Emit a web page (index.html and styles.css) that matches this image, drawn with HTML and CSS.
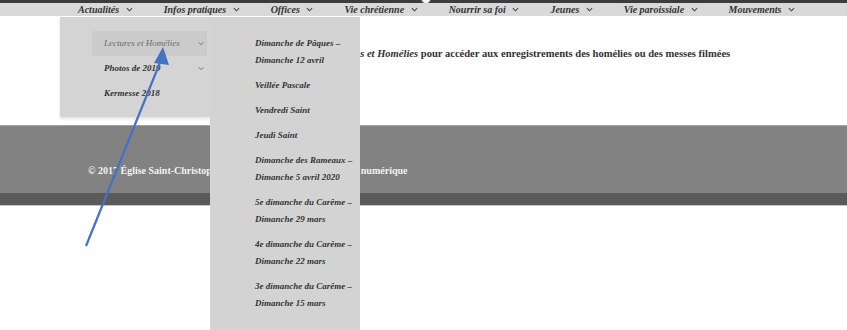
FILE: index.html
```html
<!DOCTYPE html>
<html lang="fr">
<head>
    <meta charset="UTF-8">
    <title>Lectures et Homélies</title>
    <link rel="stylesheet" href="styles.css">
</head>
<body>
<div class="page">
    <div class="topline"><span class="knob"></span></div>
    <nav class="menu">
        <ul class="menu-list">
            <li class="menu-item active">Actualités <svg class="chev" viewBox="0 0 8 5"><polyline points="1,1 4,4 7,1"/></svg>
                <ul class="sub">
                    <li class="sub-item hover">Lectures et Homélies <svg class="chev" viewBox="0 0 8 5"><polyline points="1,1 4,4 7,1"/></svg></li>
                    <li class="sub-item">Photos de 2019 <svg class="chev" viewBox="0 0 8 5"><polyline points="1,1 4,4 7,1"/></svg></li>
                    <li class="sub-item">Kermesse 2018</li>
                    <ul class="sub sub-2">
                        <li class="sub-item">Dimanche de Pâques – Dimanche 12 avril</li>
                        <li class="sub-item">Veillée Pascale</li>
                        <li class="sub-item">Vendredi Saint</li>
                        <li class="sub-item">Jeudi Saint</li>
                        <li class="sub-item">Dimanche des Rameaux – Dimanche 5 avril 2020</li>
                        <li class="sub-item">5e dimanche du Carême – Dimanche 29 mars</li>
                        <li class="sub-item">4e dimanche du Carême – Dimanche 22 mars</li>
                        <li class="sub-item">3e dimanche du Carême – Dimanche 15 mars</li>
                    </ul>
                </ul>
            </li>
            <li class="menu-item">Infos pratiques <svg class="chev" viewBox="0 0 8 5"><polyline points="1,1 4,4 7,1"/></svg></li>
            <li class="menu-item">Offices <svg class="chev" viewBox="0 0 8 5"><polyline points="1,1 4,4 7,1"/></svg></li>
            <li class="menu-item">Vie chrétienne <svg class="chev" viewBox="0 0 8 5"><polyline points="1,1 4,4 7,1"/></svg></li>
            <li class="menu-item">Nourrir sa foi <svg class="chev" viewBox="0 0 8 5"><polyline points="1,1 4,4 7,1"/></svg></li>
            <li class="menu-item">Jeunes <svg class="chev" viewBox="0 0 8 5"><polyline points="1,1 4,4 7,1"/></svg></li>
            <li class="menu-item">Vie paroissiale <svg class="chev" viewBox="0 0 8 5"><polyline points="1,1 4,4 7,1"/></svg></li>
            <li class="menu-item">Mouvements <svg class="chev" viewBox="0 0 8 5"><polyline points="1,1 4,4 7,1"/></svg></li>
        </ul>
    </nav>

    <main class="content">
        <p>Pour revoir les messes, cliquez sur Actualités &gt; <em>Lectures et Homélies</em> pour accéder aux enregistrements des homélies ou des messes filmées</p>
    </main>

    <footer class="footer">
        <div class="footer-main">
            <p>© 2017 Église Saint-Christophe de Javel – Réalisé avec l'Atelier numérique</p>
        </div>
        <div class="footer-bottom"></div>
    </footer>

    <svg class="arrow" width="847" height="330" viewBox="0 0 847 330">
        <line x1="86" y1="246" x2="161" y2="60" />
        <polygon points="163,47 154,63 169,65" />
    </svg>
</div>
</body>
</html>
```

FILE: styles.css
```css
body {
    margin: 0;
    background: #fff;
    font-family: "Liberation Serif", serif;
    color: #333;
}

.page {
    position: relative;
    height: 330px;
    overflow: hidden;
}

.topline {
    height: 3px;
    background: #3c3c3c;
    position: relative;
}

.knob {
    position: absolute;
    left: 421px;
    top: -6px;
    width: 8px;
    height: 8px;
    border-radius: 50%;
    background: #fff;
    border: 1px solid #777;
}

.menu {
    background: #d9d9d9;
    height: 13px;
    position: relative;
    z-index: 5;
}

.menu-list {
    list-style: none;
    margin: 0;
    padding: 0 0 0 60px;
    display: flex;
}

.menu-item {
    position: relative;
    padding: 0 15.5px 0 18px;
    font-size: 10px;
    line-height: 13px;
    font-weight: bold;
    font-style: italic;
    color: #333;
    white-space: nowrap;
}

.menu-item + .menu-item {
    padding-left: 15.5px;
}

.chev {
    width: 7px;
    height: 5px;
    margin-left: 4px;
    vertical-align: 1px;
    fill: none;
    stroke: #444;
    stroke-width: 1.2;
}

.sub {
    list-style: none;
    margin: 0;
    position: absolute;
    top: 14px;
    left: 0;
    width: 150px;
    box-sizing: border-box;
    padding: 14px 3px 11px 32px;
    background: #d4d4d4;
    box-shadow: 0 2px 3px rgba(0, 0, 0, 0.12);
    white-space: normal;
}

.sub-item {
    padding: 4px 3px 4px 12px;
    font-size: 9px;
    line-height: 17px;
    display: flex;
    justify-content: space-between;
    align-items: center;
}

.sub-item .chev {
    stroke: #666;
    width: 6px;
}

.sub-item.hover {
    background: #cbcbcb;
    font-weight: normal;
    color: #6a6a6a;
}

.sub-2 {
    top: 0;
    left: 150px;
    width: 150px;
    padding: 14px 0 30px 33px;
    background: #d3d3d3;
    box-shadow: none;
}

.sub-2 .sub-item {
    display: block;
    padding-right: 5px;
}

.content {
    height: 109px;
    box-sizing: border-box;
    padding: 31px 0 0 115px;
}

.content p {
    margin: 0;
    font-size: 10.55px;
    font-weight: bold;
    line-height: 14px;
    white-space: nowrap;
}

.footer-main {
    height: 67px;
    background: #828282;
    border-top: 1px solid #a3a3a3;
    padding: 0 0 0 88px;
    display: flex;
    align-items: flex-end;
}

.footer-main p {
    margin: 0 0 17px;
    color: #f2f2f2;
    font-size: 10px;
    font-weight: bold;
    white-space: nowrap;
}

.footer-bottom {
    height: 12px;
    background: #5a5a5a;
    border-bottom: 1px solid #c4c4c4;
}

.arrow {
    position: absolute;
    left: 0;
    top: 0;
    z-index: 10;
}

.arrow line {
    stroke: #4472c4;
    stroke-width: 2.2;
}

.arrow polygon {
    fill: #4472c4;
}
```
